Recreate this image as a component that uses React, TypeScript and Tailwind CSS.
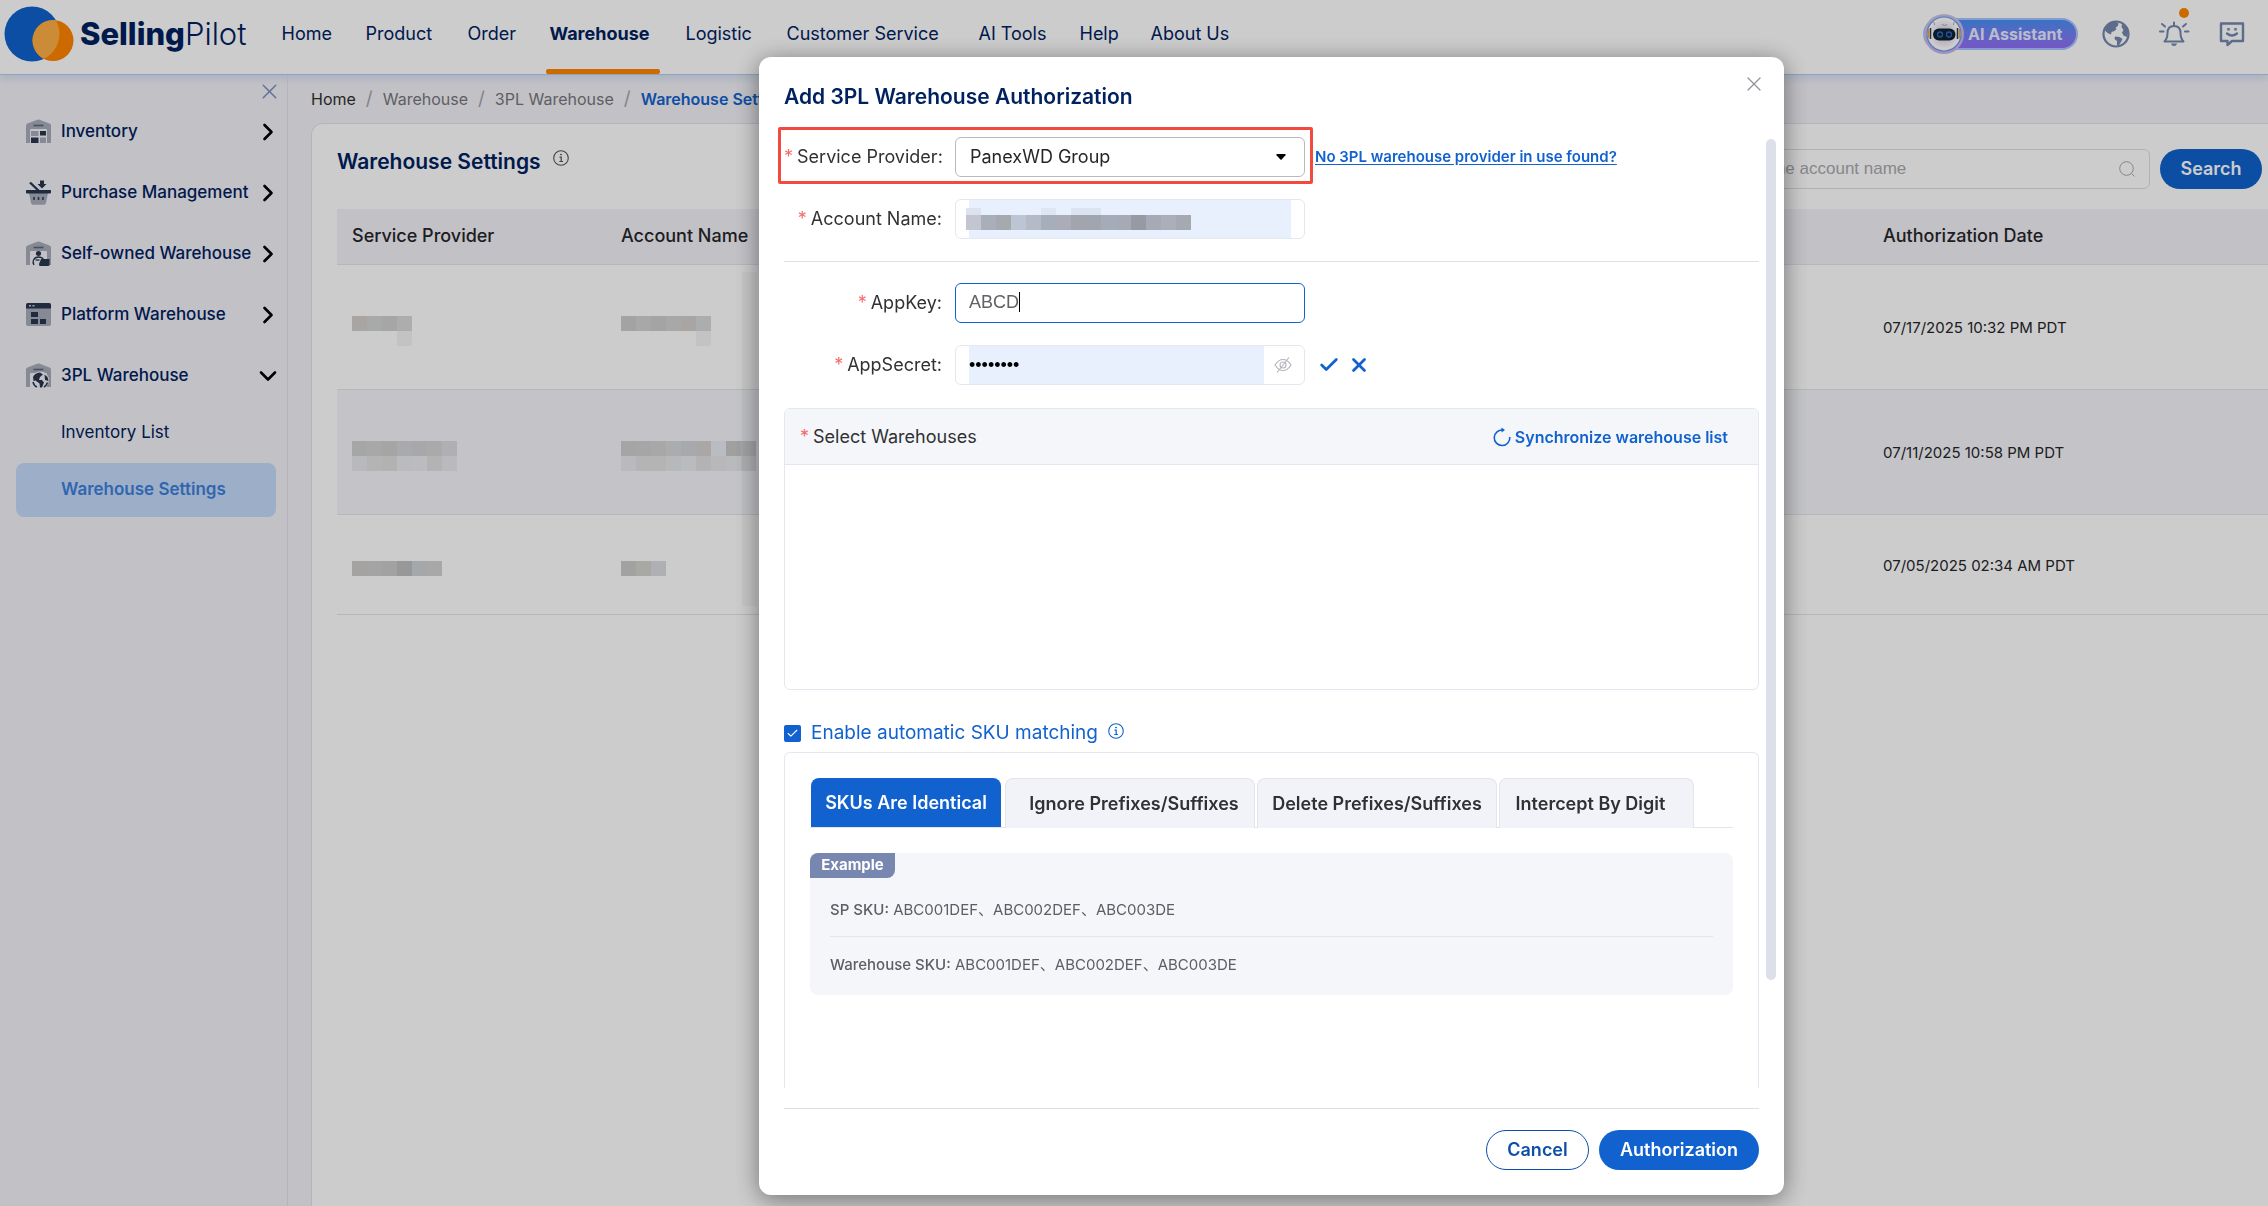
import { ReactNode } from 'react';
import { Check, ChevronDown, ChevronRight, X } from 'lucide-react';

const NAV_ITEMS = ['Home', 'Product', 'Order', 'Warehouse', 'Logistic', 'Customer Service', 'AI Tools', 'Help', 'About Us'];

const WarehouseShell = ({ children }: { children: ReactNode }) => (
  <svg viewBox="0 0 25 25" className="h-[25px] w-[25px] shrink-0">
    <path d="M0 24V6.5Q0 5 1.5 4.4L11.3.8Q12.5.3 13.7.8L23.5 4.4Q25 5 25 6.5V24H21V11Q21 10 20 10H5Q4 10 4 11V24Z" fill="#a7adba" />
    <path d="M7.5 6.5h10" stroke="#5c6579" strokeWidth="1.6" />
    {children}
  </svg>
);

const InventoryIcon = () => (
  <WarehouseShell>
    <path d="M5 12h7.5v5H5zM14 18.500h6V24h-6z" fill="#a7adba" />
    <path d="M14 12h6v4.500h-6zM5 18.500h7.500V24H5z" fill="#293650" />
  </WarehouseShell>
);

const PurchaseIcon = () => (
  <svg viewBox="0 0 25 25" className="h-[25px] w-[25px] shrink-0">
    <path d="M3 13h19l-2 10q-.4 1.700-2 1.700H7q-1.600 0-2-1.700z" fill="#a7adba" />
    <path d="M.5 10h24q.5 0 .5 1v1.500q0 1-1 1H1q-1 0-1-1V11q0-1 .5-1z" fill="#293650" />
    <path d="M4 2.500l9 8.500" stroke="#293650" strokeWidth="2.400" />
    <path d="M14 .5h4v3.500h2.500L16 8.500 11.500 4h2.500z" fill="#293650" />
    <path d="M8 17v3M12.500 17v3M17 17v3" stroke="#293650" strokeWidth="1.500" />
  </svg>
);

const SelfOwnedIcon = () => (
  <WarehouseShell>
    <circle cx="12.500" cy="12.500" r="2.600" fill="#293650" />
    <path d="M8 24q-1.500-2.500-.5-5 1.500-3 5-3t5 2.500" fill="none" stroke="#293650" strokeWidth="1.300" />
    <path d="M9.500 19h4" stroke="#293650" strokeWidth="1.300" />
    <path d="M15 18h8.500v5.500q0 1.500-1.500 1.500h-7.500q-2 0-1.500-2z" fill="#293650" />
  </WarehouseShell>
);

const PlatformIcon = () => (
  <svg viewBox="0 0 25 25" className="h-[25px] w-[25px] shrink-0">
    <rect y="1" width="25" height="23" rx="2" fill="#a7adba" />
    <path d="M0 6.500V3q0-2 2-2h21q2 0 2 2v3.500z" fill="#293650" />
    <path d="M3 3.700h2M6.500 3.700h2" stroke="#c9cedb" strokeWidth="1.600" />
    <path d="M5 10h7v5H5zM5 17h7v5H5zM14 17h6v5h-6z" fill="#293650" />
  </svg>
);

const ThirdPartyIcon = () => (
  <WarehouseShell>
    <circle cx="14.500" cy="17" r="8.500" fill="#f3f2f8" />
    <path d="M7 14q1.500-4 7-4.500l3 2-3 2.500-1 3h3l2 2.500-2 5h-2l-.5-4-4-3-2 .500zM18.500 11.500l3 2.500 1 4-3.500-1z" fill="#293650" />
    <path d="M7 19q1 4 4 5M21.500 19.500q-1 3-3.500 4.500" fill="none" stroke="#293650" strokeWidth="1.500" />
  </WarehouseShell>
);

const InfoIcon = ({ className }: { className: string }) => (
  <svg viewBox="0 0 16 16" className={className} fill="none" stroke="currentColor">
    <circle cx="8" cy="8" r="7.300" strokeWidth="1.100" />
    <path d="M6.500 7.200H8.200V11.300M6.300 11.500h3.700" strokeWidth="1.200" />
    <circle cx="8" cy="4.600" r=".5" fill="currentColor" />
  </svg>
);

const Logo = () => (
  <a href="#home" className="flex shrink-0 items-center gap-1.5 text-[#00215f]">
    <svg viewBox="0 0 70 56" className="h-14 w-[70px]">
      <circle cx="28" cy="28" r="27.500" fill="#1162cf" />
      <circle cx="49" cy="34.500" r="20.500" fill="#ff8500" />
      <clipPath id="logo-clip">
        <circle cx="28" cy="28" r="27.500" />
      </clipPath>
      <circle cx="49" cy="34.500" r="20.500" fill="#ffae45" clipPath="url(#logo-clip)" />
    </svg>
    <span className="text-[31px] leading-10">
      <span className="font-extrabold">Selling</span>
      <span className="font-light">Pilot</span>
    </span>
  </a>
);

const RobotIcon = () => (
  <svg viewBox="0 0 40 40" className="absolute -left-px -top-1.5 h-10 w-10">
    <defs>
      <linearGradient id="ring" x1="0" y1="0" x2="0" y2="1">
        <stop offset="0" stopColor="#c8c8e8" />
        <stop offset="1" stopColor="#c9b4ee" />
      </linearGradient>
      <radialGradient id="head">
        <stop offset=".5" stopColor="#eadff0" />
        <stop offset="1" stopColor="#ffffff" />
      </radialGradient>
    </defs>
    <circle cx="20" cy="20" r="20" fill="url(#ring)" />
    <circle cx="20" cy="20" r="17" fill="#fff" stroke="#7195ee" strokeWidth="1.200" />
    <circle cx="20" cy="20" r="14.500" fill="url(#head)" />
    <path d="M4.500 15v9M35.500 15v9" stroke="#f3a526" strokeWidth="1.500" />
    <path d="M6.500 14v11M33.500 14v11" stroke="#2c3a68" strokeWidth="1.500" />
    <rect x="9" y="14.500" width="22.500" height="12" rx="6" fill="#0b2333" />
    <circle cx="16" cy="20.500" r="2.500" fill="none" stroke="#3b62c4" strokeWidth="1.300" />
    <circle cx="25" cy="20.500" r="2.500" fill="none" stroke="#3b62c4" strokeWidth="1.300" />
    <path d="M18 10.500l2.500 1 2.500-1M10 8l.5 3M30 8l-.5 3" fill="none" stroke="#9aa7c5" />
  </svg>
);

const HeaderTools = () => (
  <div className="ml-auto flex items-center pr-[22px] text-[#7388ad]">
    <button
      type="button"
      className="relative mr-6 flex h-8 w-[155px] items-center rounded-full border-2 border-[#a8c4ff] bg-linear-to-b from-[#4490f5] to-[#8f6df5] pl-[43px] text-base font-bold text-[#e9eaff]"
    >
      <RobotIcon />
      <span className="whitespace-nowrap">AI Assistant</span>
    </button>
    <button type="button" aria-label="Language" className="mr-7">
      <svg viewBox="0 0 28 28" className="h-7 w-7">
        <circle cx="14" cy="14" r="12.500" fill="none" stroke="currentColor" strokeWidth="2.200" />
        <path
          d="M4 6q5-5 10-4l2.500 1-.5 3-2.500 1.500 1 1.500-2 2-3 1-.5 2.500L5.500 13 3 10.500zM20 4q5 3 6.500 8l-1.500 5-3.500-1.500-1.500-3 1.500-2.500-2-3zM13 16.500l4.500.5 3 2-1.500 3-2.500 4-1.500-.5V21l-2.500-2z"
          fill="currentColor"
        />
      </svg>
    </button>
    <button type="button" aria-label="Notifications" className="relative mr-7">
      <svg viewBox="0 0 32 28" className="h-7 w-8" fill="none" stroke="currentColor" strokeWidth="2" strokeLinecap="round">
        <path d="M6.500 21.500h19q-3-3-3-8.500 0-7-6.500-7t-6.500 7q0 5.500-3 8.500zM16 2.500v2.500" strokeLinejoin="round" />
        <path d="M2 11.500h3.500M27 11.500h3.500M4 4l3 2.500M28 4L25 6.500" />
        <path d="M13 23.500h6q-.5 2.500-3 2.500t-3-2.500z" fill="currentColor" stroke="none" />
      </svg>
      <span className="absolute right-px -top-3 h-2.5 w-2.5 rounded-full bg-[#ff8500]" />
    </button>
    <button type="button" aria-label="Feedback">
      <svg viewBox="0 0 28 28" className="h-7 w-7" fill="none" stroke="currentColor" strokeWidth="2.400">
        <path d="M3 3.500h22v17.500H14L9.500 25v-4H3z" strokeLinejoin="round" />
        <path d="M9 13.500q5 4 10 0" strokeLinecap="round" />
        <path d="M10.500 8v2.500M17.500 8v2.500" />
      </svg>
    </button>
  </div>
);

const Header = () => (
  <header className="relative z-10 flex h-[75px] items-start border-b border-[#b4cbf2] bg-white pl-1 pt-[6px] shadow-[0_4px_8px_#d5dff0]">
    <Logo />
    <nav className="ml-[35px] grid h-[68px] grid-cols-[84px_102px_82px_136px_101px_192px_101px_71px_90px] text-lg text-[#00215f]">
      {NAV_ITEMS.map(item => (
        <a key={item} href={`#${item.toLowerCase()}`} className={item === 'Warehouse' ? 'relative font-bold' : ''}>
          <span className="block whitespace-nowrap leading-[56px]">{item}</span>
          {item === 'Warehouse' && <span className="absolute -left-1 bottom-0 h-[5px] w-[114px] rounded-xs bg-[#ff8500]" />}
        </a>
      ))}
    </nav>
    <div className="ml-auto flex h-14 items-center">
      <HeaderTools />
    </div>
  </header>
);

const MENU = [
  { label: 'Inventory', icon: <InventoryIcon /> },
  { label: 'Purchase Management', icon: <PurchaseIcon /> },
  { label: 'Self-owned Warehouse', icon: <SelfOwnedIcon /> },
  { label: 'Platform Warehouse', icon: <PlatformIcon /> },
  { label: '3PL Warehouse', icon: <ThirdPartyIcon />, open: true },
];

const Sidebar = () => (
  <aside className="relative w-72 shrink-0 border-r border-[#e2e3ec] pt-[26px] text-[#00215f]">
    <button type="button" aria-label="Collapse menu" className="absolute right-[5px] top-1 text-[#7c8fc4]">
      <X size={25} strokeWidth={1.5} />
    </button>
    <ul>
      {MENU.map(({ label, icon, open }) => (
        <li key={label}>
          <button type="button" className="flex h-[61px] w-full items-center pl-[26px] pr-[5px] text-[17px] font-medium">
            {icon}
            <span className="ml-2.5 whitespace-nowrap">{label}</span>
            <span className="ml-auto text-black">
              {open ? <ChevronDown size={28} strokeWidth={2.25} /> : <ChevronRight size={28} strokeWidth={2.25} />}
            </span>
          </button>
        </li>
      ))}
    </ul>
    <a href="#inventory-list" className="ml-4 mr-[11px] flex h-[54px] items-center pl-[45px] text-[17px]">
      Inventory List
    </a>
    <a href="#settings" className="ml-4 mr-[11px] mt-[3px] flex h-[54px] items-center rounded-lg bg-[#c5dbfa] pl-[45px] text-[17px] font-semibold text-[#3d80dc]">
      Warehouse Settings
    </a>
  </aside>
);

// Redacted values are kept as rows of grey blocks
const Mosaic = ({ rows }: { rows: string[][] }) => (
  <div className="flex flex-col">
    {rows.map((row, r) => (
      <div key={r} className="flex">
        {row.map((color, c) => (
          <span key={c} className="h-[15px] w-[15px]" style={{ backgroundColor: color }} />
        ))}
      </div>
    ))}
  </div>
);

const T = 'transparent';

const ROWS = [
  {
    provider: [
      ['#d2cfcc', '#d3d5d4', '#d0d0d0', '#d9d9d9'],
      [T, T, T, '#f4f4f4'],
    ],
    account: [
      ['#cccccc', '#d2d2d2', '#cecece', '#d2d2d2', '#d2cfcb', '#d6d9db'],
      [T, T, T, T, T, '#f4f4f4'],
    ],
    date: '07/17/2025 10:32 PM PDT',
    row: 'h-[125px]',
  },
  {
    provider: [
      ['#d0d0d1', '#d2d3d4', '#cfcfd0', '#d4d5d9', '#d2d3d6', '#d5d5d5', '#dcdde1'],
      ['#e6e8ec', '#e2e2e3', '#dfdfe0', '#e9eaee', '#ebecf0', '#e0e0e2', '#e8e9ed'],
    ],
    account: [
      ['#cfcfd0', '#d0d0d2', '#d2d2d3', '#d6d7da', '#d1d4d7', '#d4d3d1', '#e8ecf2', '#c8c8ca', '#d0d1d4'],
      ['#e8e9ed', '#e2e2e3', '#e2e2e3', '#e5e6e8', '#e9eaee', '#e0e0e2', '#e6e7ea', '#e8e9ec', '#dfe0e3'],
    ],
    date: '07/11/2025 10:58 PM PDT',
    row: 'h-[125px] bg-[#f5f6fa]',
  },
  {
    provider: [['#cfcccb', '#cecece', '#cbcbcb', '#bebebe', '#cfd2d5', '#d3d3d2']],
    account: [['#cbcbcb', '#d3d2cf', '#dadde0']],
    date: '07/05/2025 02:34 AM PDT',
    row: 'h-[100px]',
  },
];

const Crumb = () => <span className="text-[19px] text-[#a5a5aa]">/</span>;

const Content = () => (
  <main className="flex min-w-0 flex-1 flex-col pl-[23px]">
    <nav aria-label="Breadcrumb" className="flex h-12 items-center gap-2.5 text-base text-[#77777c]">
      <a href="#home" className="text-[#303033]">Home</a>
      <Crumb />
      <a href="#warehouse">Warehouse</a>
      <Crumb />
      <a href="#3pl">3PL Warehouse</a>
      <Crumb />
      <a href="#settings" className="font-semibold text-[#1162cf]">Warehouse Settings</a>
    </nav>
    <section className="flex-1 rounded-tl-xl border-l border-t border-[#e2e3ec] bg-white pl-[25px] pt-[25px]">
      <div className="flex h-10 items-start pr-[6px]">
        <h1 className="text-[21px] font-semibold leading-[26px] text-[#00215f]">Warehouse Settings</h1>
        <InfoIcon className="ml-3 mt-px h-4 w-4 text-[#55555a]" />
        <label className="ml-auto flex h-10 w-[494px] items-center rounded-md border border-[#dddde8] pr-3.5">
          <input
            type="text"
            aria-label="Account name"
            placeholder="Please enter the account name"
            className="min-w-0 flex-1 pl-3.5 font-['Liberation_Sans',sans-serif] text-[17px] outline-none placeholder:text-[#a9a9ae]"
          />
          <svg viewBox="0 0 16 16" className="h-4 w-4 text-[#a9a9ae]" fill="none" stroke="currentColor">
            <circle cx="7.500" cy="7.500" r="6.800" />
            <path d="M12.500 12.500l3 3" />
          </svg>
        </label>
        <button type="button" className="ml-2.5 h-10 w-[102px] rounded-full bg-[#1162cf] text-lg font-semibold text-white">
          Search
        </button>
      </div>
      <div className="relative mt-5">
        <table className="w-full table-fixed border-collapse text-left text-[#26262a]">
          <colgroup>
            <col className="w-[269px]" />
            <col />
            <col className="w-[400px]" />
          </colgroup>
          <thead>
            <tr className="h-[55px] border-b border-[#e4e5ea] bg-[#f3f2f8] text-lg">
              <th className="pl-[15px] font-medium">Service Provider</th>
              <th className="pl-[15px] font-medium">Account Name</th>
              <th className="pl-[15px] font-medium">Authorization Date</th>
            </tr>
          </thead>
          <tbody>
            {ROWS.map(({ provider, account, date, row }) => (
              <tr key={date} className={`border-b border-[#e4e5ea] ${row}`}>
                <td className="pl-[15px] pt-2"><Mosaic rows={provider} /></td>
                <td className="pl-[15px] pt-2"><Mosaic rows={account} /></td>
                <td className="pl-[15px] pt-1 text-[15px]">{date}</td>
              </tr>
            ))}
          </tbody>
        </table>
        <span className="absolute left-[405px] top-[63px] h-[334px] w-[15px] bg-black/[0.03]" />
      </div>
    </section>
  </main>
);

interface FieldProps {
  id: string;
  label: string;
  children: ReactNode;
}

const Field = ({ id, label, children }: FieldProps) => (
  <div className="relative flex h-10 items-center">
    <label htmlFor={id} className="mr-[13px] w-[158px] whitespace-nowrap text-right text-lg text-[#303133]">
      <span className="mr-1 text-[#f56c6c]">*</span>
      {label}:
    </label>
    {children}
  </div>
);

const ACCOUNT_MOSAIC = [
  [
    '#c3c6d0', '#a9afba', '#a6a9ae', '#bcc5d3', '#b4bac8', '#a7aebb', '#aaacb7', '#a2a5ae',
    '#a1a5ae', '#a4abb9', '#a5aab5', '#979aa3', '#a5aab6', '#abafba', '#a5a9b1',
  ],
];

const FormFields = () => (
  <>
    <Field id="provider" label="Service Provider">
      <div className="relative">
        <select id="provider" className="h-10 w-[350px] appearance-none rounded-md border border-[#b9b9bd] bg-white pl-3.5 text-lg text-[#26262a]">
          <option>PanexWD Group</option>
        </select>
        <svg viewBox="0 0 10 6" className="pointer-events-none absolute right-[19px] top-[17px] h-[6px] w-[10px]">
          <path d="M1 0h8q1 .300.500 1.200L5.600 5.600q-.6.500-1.200 0L.500 1.200Q0 .300 1 0z" />
        </svg>
      </div>
      <a href="#contact" className="ml-2.5 whitespace-nowrap text-[15px] font-semibold text-[#1162cf] underline underline-offset-2">
        No 3PL warehouse provider in use found?
      </a>
      <span className="pointer-events-none absolute -left-[6px] -top-2.5 h-[57px] w-[535px] rounded-xs border-[3px] border-[#f24a3f]" />
    </Field>
    <div className="mt-[22px]">
      <Field id="account" label="Account Name">
        <div className="relative h-10 w-[350px] rounded-md border border-[#e4e6f0] px-[13px]">
          <input id="account" type="text" className="h-full w-full bg-[#e8f0fe] outline-none" />
          <div className="pointer-events-none absolute left-2.5 top-2">
            <div className="flex h-[7px]">
              <span className="w-[15px] bg-[#dde3ee]" />
              <span className="ml-[60px] w-[15px] bg-[#dfe6f3]" />
              <span className="ml-[15px] w-[30px] bg-[#dce3f0]" />
            </div>
            <Mosaic rows={ACCOUNT_MOSAIC} />
          </div>
        </div>
      </Field>
    </div>
    <div className="mt-[22px] border-t border-[#dcdfe6] pt-[21px]">
      <Field id="appkey" label="AppKey">
        <div className="relative">
          <input
            id="appkey"
            type="text"
            defaultValue="ABCD"
            className="h-10 w-[350px] rounded-md border border-[#1162cf] pb-0.5 pl-[13px] font-['Liberation_Sans',sans-serif] text-lg text-[#606266] outline-none"
          />
          <span className="absolute left-16 top-[9px] h-5 w-px bg-black" />
        </div>
      </Field>
    </div>
    <div className="mt-[22px]">
      <Field id="appsecret" label="AppSecret">
        <div className="flex h-10 w-[350px] items-center rounded-md border border-[#e4e6f0] pl-[13px]">
          <input
            id="appsecret"
            type="password"
            defaultValue="password"
            className="h-full w-[295px] bg-[#e8f0fe] font-['Liberation_Sans',sans-serif] text-lg text-black outline-none"
          />
          <button type="button" aria-label="Show secret" className="ml-2.5 text-[#b4b7be]">
            <svg viewBox="0 0 18 16" className="h-4 w-[18px]" fill="none" stroke="currentColor" strokeWidth="1.200">
              <path d="M1 8q3.500-5.500 8-5.500T17 8q-3.500 5.500-8 5.500T1 8zM3 15.500L15 .5" />
              <circle cx="9" cy="8" r="3" />
            </svg>
          </button>
        </div>
        <button type="button" aria-label="Confirm" className="ml-[13px] text-[#1162cf]">
          <Check size={22} strokeWidth={3} />
        </button>
        <button type="button" aria-label="Clear" className="ml-2 text-[#1162cf]">
          <X size={22} strokeWidth={3} />
        </button>
      </Field>
    </div>
  </>
);

const TABS = ['Ignore Prefixes/Suffixes', 'Delete Prefixes/Suffixes', 'Intercept By Digit'];

const SkuPanel = () => (
  <div className="mt-2 min-h-0 flex-1 rounded-t-md border border-b-0 border-[#e4e6f0] px-[25px] pt-[25px]">
    <div role="tablist" className="grid h-[50px] grid-cols-[193px_250px_240px_195px] gap-x-[2px] border-b border-[#e4e5ea] text-lg font-semibold text-[#303133]">
      <button type="button" role="tab" aria-selected className="ml-px mr-0.5 h-[49px] whitespace-nowrap rounded-t-lg bg-[#1162cf] text-white">
        SKUs Are Identical
      </button>
      {TABS.map((tab, i) => (
        <button
          key={tab}
          type="button"
          role="tab"
          className={`h-[50px] whitespace-nowrap rounded-t-lg border border-b-0 border-[#e4e5ea] bg-[#f2f3f8] ${i === 0 ? 'pl-2' : i === 2 ? 'pr-3' : ''}`}
        >
          {tab}
        </button>
      ))}
    </div>
    <div className="mt-[25px] h-[142px] rounded-lg bg-[#f4f6fa] px-5 text-[15px] text-[#5c5e63]">
      <span className="-ml-5 flex h-[25px] w-[85px] items-center justify-center rounded-br-lg rounded-tl-lg bg-[#7787b0] font-bold text-white">
        Example
      </span>
      <p className="border-b border-[#e4e6e6] pb-[15px] pt-5 leading-[23px]">
        <span className="font-medium">SP SKU:</span> ABC001DEF、ABC002DEF、ABC003DE
      </p>
      <p className="pt-4 leading-[23px]">
        <span className="font-medium">Warehouse SKU:</span> ABC001DEF、ABC002DEF、ABC003DE
      </p>
    </div>
  </div>
);

const AuthorizationDialog = () => (
  <div
    role="dialog"
    aria-labelledby="dialog-title"
    className="relative flex w-[1025px] flex-col rounded-xl bg-white px-[25px] pt-6 shadow-[0_4px_24px_rgba(0,0,0,0.45)]"
  >
    <h2 id="dialog-title" className="text-[21px] font-semibold leading-8 text-[#00215f]">Add 3PL Warehouse Authorization</h2>
    <button type="button" aria-label="Close" className="absolute right-[18px] top-[15px] text-[#909399]">
      <X size={24} strokeWidth={1.25} />
    </button>
    <div className="-ml-2 mt-3.5 flex min-h-0 flex-1 flex-col overflow-hidden pl-2 pt-2.5">
      <FormFields />
      <section className="mt-[23px] h-[282px] shrink-0 rounded-md border border-[#e4e6f0]">
        <div className="flex h-14 items-center justify-between rounded-t-md border-b border-[#e4e6f0] bg-[#f4f6fa] pl-[15px] pr-[30px]">
          <h3 className="text-lg text-[#303133]">
            <span className="mr-1 text-[#f56c6c]">*</span>
            Select Warehouses
          </h3>
          <button type="button" className="flex items-center gap-1 text-base font-semibold text-[#1162cf]">
            <svg viewBox="0 0 18 20" className="h-5 w-[18px]" fill="none" stroke="currentColor" strokeWidth="1.600">
              <path d="M10 3A7.800 7.800 0 1 0 16.800 10" />
              <path d="M8.500.5L12 3 8.500 5.500z" fill="currentColor" stroke="none" />
            </svg>
            Synchronize warehouse list
          </button>
        </div>
      </section>
      <label className="mt-8 flex h-[22px] shrink-0 items-center text-[19px] text-[#1162cf]">
        <span className="relative mr-2.5 h-[17px] w-[17px]">
          <input type="checkbox" defaultChecked className="block h-[17px] w-[17px] appearance-none rounded-xs bg-[#1162cf]" />
          <Check size={13} strokeWidth={2} className="pointer-events-none absolute left-0.5 top-0.5 text-white" />
        </span>
        Enable automatic SKU matching
        <InfoIcon className="mb-1 ml-2.5 h-4 w-4" />
      </label>
      <SkuPanel />
    </div>
    <span className="absolute right-2 top-[82px] h-[841px] w-2.5 rounded-full bg-[#dce0e9]" />
    <footer className="mt-5 flex justify-end gap-2.5 border-t border-[#dcdfe6] pb-[25px] pt-[21px] text-lg font-semibold">
      <button type="button" className="h-10 w-[103px] rounded-full border border-[#0d4fa8] text-[#0d4fa8]">Cancel</button>
      <button type="button" className="h-10 w-40 rounded-full bg-[#1162cf] text-white">Authorization</button>
    </footer>
  </div>
);

const App = () => (
  <div className="relative flex h-screen flex-col overflow-hidden bg-[#f3f2f8] font-['Inter','Noto_Sans_CJK_SC',sans-serif]">
    <Header />
    <div className="flex min-h-0 flex-1">
      <Sidebar />
      <Content />
    </div>
    <div className="fixed inset-0 z-20 flex justify-center bg-black/20 pb-[11px] pl-[275px] pt-[57px]">
      <AuthorizationDialog />
    </div>
  </div>
);

export default App;
